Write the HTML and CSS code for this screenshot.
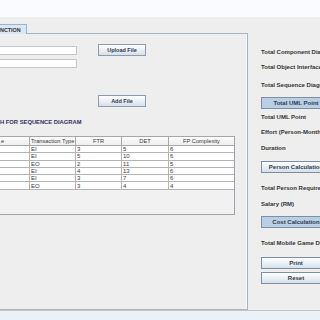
FILE: index.html
```html
<!DOCTYPE html>
<html>
<head>
<meta charset="utf-8">
<link rel="stylesheet" href="styles.css">
</head>
<body>
<div class="topbar"></div>
<div class="main">
  <div class="left">
    <div class="tabs"><div class="tab">NCTION</div></div>
    <div class="panel">
      <div class="form">
        <div class="fields">
          <div class="field"></div>
          <div class="field"></div>
        </div>
        <div class="btns">
          <div class="btn">Upload File</div>
          <div class="btn btn-add">Add File</div>
        </div>
      </div>
      <div class="title">H FOR SEQUENCE DIAGRAM</div>
      <div class="scroll">
        <table class="grid">
          <colgroup>
            <col class="c1"><col class="c2"><col class="c3"><col class="c4"><col class="c5">
          </colgroup>
          <thead>
            <tr><th class="l">e</th><th class="l">Transaction Type</th><th>FTR</th><th>DET</th><th>FP Complexity</th></tr>
          </thead>
          <tbody>
            <tr><td></td><td>EI</td><td>3</td><td>5</td><td>6</td></tr>
            <tr><td></td><td>EI</td><td>5</td><td>10</td><td>6</td></tr>
            <tr><td></td><td>EO</td><td>2</td><td>11</td><td>5</td></tr>
            <tr><td></td><td>EI</td><td>4</td><td>13</td><td>6</td></tr>
            <tr><td></td><td>EI</td><td>3</td><td>7</td><td>6</td></tr>
            <tr><td></td><td>EO</td><td>3</td><td>4</td><td>4</td></tr>
          </tbody>
        </table>
      </div>
    </div>
  </div>
  <div class="right">
    <div class="lbl m1">Total Component Diagram</div>
    <div class="lbl m2">Total Object Interface</div>
    <div class="lbl m3">Total Sequence Diagram</div>
    <div class="rbtn blue m4">Total UML Point</div>
    <div class="lbl m5">Total UML Point</div>
    <div class="lbl m6">Effort (Person-Month)</div>
    <div class="lbl m7">Duration</div>
    <div class="rbtn m8">Person Calculation</div>
    <div class="lbl m9">Total Person Requires</div>
    <div class="lbl m10">Salary (RM)</div>
    <div class="rbtn blue m11">Cost Calculation</div>
    <div class="lbl m12">Total Mobile Game Development</div>
    <div class="rbtn m13">Print</div>
    <div class="rbtn m14">Reset</div>
  </div>
</div>
<div class="bottombar"></div>
</body>
</html>
```

FILE: styles.css
```css
html, body {
  margin: 0;
  padding: 0;
}
body {
  width: 320px;
  height: 320px;
  overflow: hidden;
  background: #eeeeee;
  font-family: "Liberation Sans", Arial, sans-serif;
  color: #333333;
}
.topbar {
  height: 17px;
  background: #f9fbfe;
}
.main {
  display: flex;
  height: 293px;
}
.left {
  width: 248px;
  flex: none;
  display: flex;
  flex-direction: column;
}
.tabs {
  padding-top: 7px;
  display: flex;
  position: relative;
  z-index: 1;
}
.tab {
  width: 27px;
  height: 10px;
  box-sizing: border-box;
  background: #d9e6f3;
  border-top: 1px solid #9fb2c8;
  border-right: 1px solid #9fb2c8;
  margin-bottom: -1px;
  font-size: 5.4px;
  font-weight: bold;
  line-height: 10px;
  color: #2f3340;
  overflow: hidden;
  white-space: nowrap;
}
.panel {
  flex: 1;
  box-sizing: border-box;
  border-top: 1px solid #a3b4c8;
  border-right: 1px solid #a3b4c8;
  border-bottom: 1px solid #b4b4b4;
  box-shadow: inset -1px 0 0 #f8f8f8;
}
.form {
  display: flex;
  align-items: flex-start;
}
.fields {
  width: 77px;
  padding-top: 12px;
  display: flex;
  flex-direction: column;
  gap: 4px;
}
.field {
  height: 9px;
  box-sizing: border-box;
  margin-left: -2px;
  background: #ffffff;
  border: 1px solid #c3c7cc;
}
.btns {
  margin-left: 21px;
  padding-top: 10px;
  display: flex;
  flex-direction: column;
}
.btn {
  width: 48px;
  height: 12px;
  box-sizing: border-box;
  border: 1px solid #8d9aaa;
  background: linear-gradient(#fdfeff, #e8eef5 55%, #d6dfe9);
  font-size: 5.5px;
  font-weight: bold;
  color: #30364a;
  text-align: center;
  line-height: 10px;
}
.btn-add {
  margin-top: 39px;
}
.title {
  margin-top: 11px;
  height: 8px;
  line-height: 8px;
  font-size: 5.8px;
  font-weight: bold;
  color: #2e3064;
  white-space: nowrap;
}
.scroll {
  margin-top: 10px;
  width: 235px;
  height: 79px;
  box-sizing: border-box;
  border-top: 1px solid #a6a6a6;
  border-right: 1px solid #9aa4b0;
  border-bottom: 1px solid #a4a4a4;
  background: #f1f1f1;
  overflow: hidden;
}
.grid {
  margin-left: -1px;
  width: 235px;
  table-layout: fixed;
  border-collapse: collapse;
  font-size: 6px;
  color: #3a3a3a;
}
.c1 { width: 30px; }
.c2 { width: 46px; }
.c3 { width: 46px; }
.c4 { width: 47px; }
.c5 { width: 66px; }
.grid th {
  height: 8px;
  padding: 0;
  font-size: 5.7px;
  font-weight: normal;
  background: linear-gradient(#fbfbfb, #eeeeee);
  border-left: 1px solid #a8a8a8;
  border-right: 1px solid #a8a8a8;
  border-bottom: 1px solid #a8a8a8;
  text-align: center;
  line-height: 7px;
  white-space: nowrap;
  overflow: hidden;
}
.grid th.l {
  text-align: left;
  padding-left: 1px;
}
.grid td {
  height: 6.3px;
  padding: 0 0 0 1px;
  background: #ffffff;
  border: 1px solid #b4b4b4;
  line-height: 6px;
  white-space: nowrap;
}
.right {
  flex: 1;
  padding-left: 13px;
  display: flex;
  flex-direction: column;
  overflow: hidden;
}
.lbl {
  height: 8px;
  line-height: 8px;
  font-size: 6px;
  font-weight: bold;
  color: #333333;
  white-space: nowrap;
}
.rbtn {
  width: 70px;
  height: 12px;
  flex: none;
  box-sizing: border-box;
  border: 1px solid #7f8f9f;
  background: linear-gradient(#fdfeff, #e9eff5 55%, #d5dfe9);
  font-size: 6px;
  font-weight: bold;
  color: #333a4a;
  text-align: center;
  line-height: 10px;
  white-space: nowrap;
}
.rbtn.blue {
  background: #b9cfe5;
  border-color: #7d8fa2;
}
.m1 { margin-top: 30.5px; }
.m2 { margin-top: 7px; }
.m3 { margin-top: 10.5px; }
.m4 { margin-top: 8px; }
.m5 { margin-top: 4px; }
.m6 { margin-top: 7px; }
.m7 { margin-top: 8px; }
.m8 { margin-top: 9px; }
.m9 { margin-top: 11px; }
.m10 { margin-top: 8px; }
.m11 { margin-top: 8px; }
.m12 { margin-top: 11px; }
.m13 { margin-top: 10px; height: 11.5px; }
.m14 { margin-top: 3.5px; height: 11.5px; }
.bottombar {
  height: 10px;
  box-sizing: border-box;
  border-top: 1px solid #c4c4c4;
  background: #eaf1f8;
}
```
